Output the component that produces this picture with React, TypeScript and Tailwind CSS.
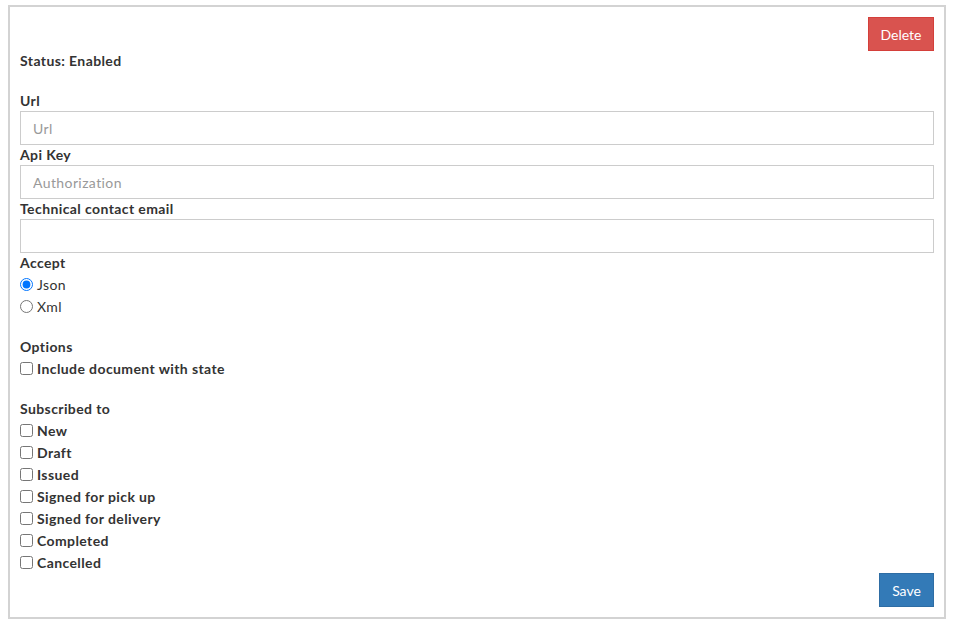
import { useState } from 'react';

const events = ['New', 'Draft', 'Issued', 'Signed for pick up', 'Signed for delivery', 'Completed', 'Cancelled'];

const Field = ({ label, placeholder }: { label: string; placeholder?: string }) => (
  <div>
    <label className="block h-5 leading-5 font-bold">{label}</label>
    <input
      type="text"
      placeholder={placeholder}
      className="block w-full h-[34px] border border-[#ccc] px-3 text-[14px] text-[#555] placeholder:text-[#999] outline-none"
    />
  </div>
);

const App = () => {
  const [accept, setAccept] = useState('json');

  return (
    <div
      className="pt-[5px] pl-2 text-[14px] text-[#333] tracking-[0.4px]"
      style={{ fontFamily: '"Segoe UI", Lato, "Noto Sans", sans-serif' }}
    >
      <div className="w-[938px] border-2 border-[#d3d3d3] p-[10px]">
        <div className="flex justify-end">
          <button className="h-[34px] w-[66px] tracking-normal bg-[#d9534f] border border-[#d43f3a] text-white">
            Delete
          </button>
        </div>
        <div className="h-5 leading-5 font-bold mb-5">Status: Enabled</div>

        <Field label="Url" placeholder="Url" />
        <Field label="Api Key" placeholder="Authorization" />
        <Field label="Technical contact email" />

        <div className="h-5 leading-5 font-bold">Accept</div>
        {[
          ['json', 'Json'],
          ['xml', 'Xml'],
        ].map(([v, t]) => (
          <label key={v} className="flex items-center h-[22px]">
            <input
              type="radio"
              name="accept"
              checked={accept === v}
              onChange={() => setAccept(v)}
              className="m-0 mr-1 w-[13px] h-[13px]"
            />
            {t}
          </label>
        ))}

        <div className="h-5 leading-5 font-bold mt-5">Options</div>
        <label className="flex items-center h-[22px] font-bold">
          <input type="checkbox" className="m-0 mr-1 w-[13px] h-[13px]" />
          Include document with state
        </label>

        <div className="h-5 leading-5 font-bold mt-5">Subscribed to</div>
        {events.map((e) => (
          <label key={e} className="flex items-center h-[22px] font-bold">
            <input type="checkbox" className="m-0 mr-1 w-[13px] h-[13px]" />
            {e}
          </label>
        ))}

        <div className="flex justify-end">
          <button className="h-[34px] w-[55px] tracking-normal bg-[#337ab7] border border-[#2e6da4] text-white">
            Save
          </button>
        </div>
      </div>
    </div>
  );
};

export default App;
